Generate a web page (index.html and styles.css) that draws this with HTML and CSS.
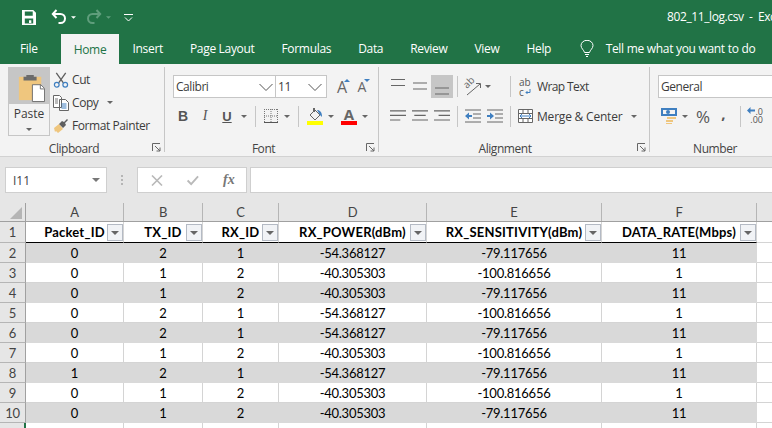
FILE: index.html
```html
<!DOCTYPE html>
<html lang="en">
<head>
<meta charset="utf-8">
<title>802_11_log.csv - Excel</title>
<link rel="stylesheet" href="styles.css">
</head>
<body>
<div class="app">
  <header class="titlebar">
    <svg class="qa qa-save" viewBox="0 0 15 16"><path fill="#fff" fill-rule="evenodd" d="M0 0h12l3 3v13H0zM3 1.500v4.500h8.500V1.500zM3 9v5.500h9V9zM7.500 11h2.500v3H7.500z"/></svg>
    <svg class="qa qa-undo" viewBox="0 0 16 16"><path fill="none" stroke="#fff" stroke-width="2" d="M5.500 1 1.800 5 5.500 9M2 5h7.500a4.500 4.500 0 0 1 0 9H7.500"/></svg>
    <svg class="qa-arrow" viewBox="0 0 6 3"><path fill="#fff" d="M0 0h6L3 3z"/></svg>
    <svg class="qa qa-redo" viewBox="0 0 16 16"><path fill="none" stroke="#5f9e7c" stroke-width="2" d="M10.500 1 14.200 5 10.500 9M14 5H6.500a4.500 4.500 0 0 0 0 9H8.500"/></svg>
    <svg class="qa-arrow qa-arrow-off" viewBox="0 0 6 3"><path fill="#5f9e7c" d="M0 0h6L3 3z"/></svg>
    <svg class="qa qa-more" viewBox="0 0 10 9"><path fill="none" stroke="#fff" d="M0 .5h9M1 3.500l3.500 3.500L8 3.500"/></svg>
    <span class="doc-title">802_11_log.csv  -  Excel</span>
  </header>

  <nav class="tabs">
    <span class="tab tab-file">File</span>
    <span class="tab tab-active">Home</span>
    <span class="tab">Insert</span>
    <span class="tab">Page Layout</span>
    <span class="tab">Formulas</span>
    <span class="tab">Data</span>
    <span class="tab">Review</span>
    <span class="tab">View</span>
    <span class="tab">Help</span>
    <svg class="bulb" viewBox="0 0 14 17"><path fill="none" stroke="#fff" d="M4.500 12.500C4 10 1 8.500 1 5.500a6 5.200 0 0 1 12 0c0 3-3 4.500-3.500 7zM5 14.500h4M6 16.500h2"/></svg>
    <span class="tell">Tell me what you want to do</span>
  </nav>

  <section class="ribbon">
    <div class="group group-clip">
      <div class="clip-body">
        <div class="paste">
          <div class="paste-top">
            <svg class="paste-icon" viewBox="0 0 30 30"><path fill="#efc67e" d="M2 3h24v25H2z"/><path fill="#6b6b6b" d="M7 3h3V1h8v2h3v4H7z"/><path fill="#fff" stroke="#6b6b6b" d="M16.500 11.500h9l4 4v14h-13z"/><path fill="none" stroke="#6b6b6b" d="M25 11.500v4.500h4"/></svg>
          </div>
          <div class="paste-bottom">
            <span>Paste</span>
            <i class="caret"></i>
          </div>
        </div>
        <div class="clip-list">
          <div class="clip-item">
            <svg class="ic16" viewBox="0 0 16 17"><path fill="none" stroke="#5f5f5f" stroke-width="1.400" d="M3 1l7.500 10.500M13 1 5.500 11.500"/><circle cx="3.500" cy="13.500" r="2.500" fill="none" stroke="#3f7fc0" stroke-width="1.300"/><circle cx="12.500" cy="13.500" r="2.500" fill="none" stroke="#3f7fc0" stroke-width="1.300"/></svg>
            <span>Cut</span>
          </div>
          <div class="clip-item">
            <svg class="ic16" viewBox="0 0 16 16"><path fill="#fff" stroke="#666" d="M.5.500h6l2 2v10h-8zM6.500 4.500h6l3 3v8h-9z"/><path stroke="#3f7fc0" d="M8.500 9h5M8.500 11h5M8.500 13h5"/><path stroke="#777" d="M2 4h3M2 6h3M2 8h3"/></svg>
            <span>Copy</span>
            <i class="caret caret-copy"></i>
          </div>
          <div class="clip-item">
            <svg class="ic16" viewBox="0 0 16 16"><path fill="#efc67e" d="M1 10l5-4 4 5-5 4-2-2-1 1z"/><path fill="#5f5f5f" d="M6 6l3-3 2 1 3-3 1 1-3 3 1 2-3 3z"/></svg>
            <span>Format Painter</span>
          </div>
        </div>
      </div>
      <div class="group-label">Clipboard</div>
      <svg class="launcher" viewBox="0 0 9 9"><path fill="none" stroke="#666" d="M.5 8V.500H8M3 3l5 5M8 4.500V8H4.500"/></svg>
    </div>

    <div class="group group-font">
      <div class="group-body">
        <div class="tool-row tool-row-top">
          <div class="combo combo-font"><span>Calibri</span><svg class="chev" viewBox="0 0 14 8"><path fill="none" stroke="#555" d="M.5 1l6.500 6.500L13.500 1"/></svg></div>
          <div class="combo combo-size"><span>11</span><svg class="chev" viewBox="0 0 14 8"><path fill="none" stroke="#555" d="M.5 1l6.500 6.500L13.500 1"/></svg></div>
          <span class="tool-w20 grow">A<svg class="tri" viewBox="0 0 6 3"><path fill="#3f7fc0" d="M3 0l3 3H0z"/></svg></span>
          <span class="tool-w20 shrink">A<svg class="tri" viewBox="0 0 6 3"><path fill="#3f7fc0" d="M0 0h6L3 3z"/></svg></span>
        </div>
        <div class="tool-row">
          <span class="tool txt-b">B</span>
          <span class="tool txt-i">I</span>
          <span class="tool txt-u">U</span>
          <span class="drop drop-12"><i class="caret"></i></span>
          <span class="vsep vsep-a"></span>
          <span class="tool"><svg class="ic14" viewBox="0 0 14 14"><path fill="none" stroke="#777" stroke-dasharray="1 1" d="M.5 0v13M7 0v13M13.500 0v13M0 .5h14M0 7h14"/><path stroke="#555" d="M0 13.500h14"/></svg></span>
          <span class="drop"><i class="caret"></i></span>
          <span class="vsep vsep-b"></span>
          <span class="tool"><svg class="ic-color" viewBox="0 0 16 17"><path fill="none" stroke="#666" d="M3 7l5-5 5 5-5 5z"/><path fill="#666" d="M6 0h2v4H6z"/><path fill="#3f7fc0" d="M10 2c3 0 5 2 5 7l-2-2z"/><path fill="#ff0" d="M0 13h16v4H0z"/></svg></span>
          <span class="drop"><i class="caret"></i></span>
          <span class="tool tool-color"><span class="color-a">A</span><i class="color-bar"></i></span>
          <span class="drop"><i class="caret"></i></span>
        </div>
      </div>
      <div class="group-label">Font</div>
      <svg class="launcher" viewBox="0 0 9 9"><path fill="none" stroke="#666" d="M.5 8V.500H8M3 3l5 5M8 4.500V8H4.500"/></svg>
    </div>

    <div class="group group-align">
      <div class="group-body">
        <div class="tool-row tool-row-top">
          <span class="tool tool-h"><svg class="ic16" viewBox="0 0 14 16"><path stroke="#666" stroke-width="1.200" d="M0 .5h14M0 6.500h14"/></svg></span>
          <span class="tool tool-h"><svg class="ic16" viewBox="0 0 14 16"><path stroke="#666" stroke-width="1.200" d="M0 4h14M0 10h14"/></svg></span>
          <span class="tool tool-h tool-on"><svg class="ic16" viewBox="0 0 14 16"><path stroke="#666" stroke-width="1.200" d="M0 9h14M0 15h14"/></svg></span>
          <span class="vsep vsep-c"></span>
          <span class="align-mid">
            <span class="tool tool-h"><svg class="ic16 ic-orient" viewBox="0 0 16 16"><text class="orient" transform="translate(2 10) rotate(-45)" x="0" y="0">ab</text><path fill="none" stroke="#666" d="M2 16 15 5M11 4.500H15.500V9"/></svg></span>
            <span class="drop drop-7"><i class="caret"></i></span>
          </span>
          <span class="vsep"></span>
          <span class="label-tool label-wrap">
            <span class="wrap-ic"><span>ab</span><span>c<svg class="wrap-arrow" viewBox="0 0 6 6"><path fill="none" stroke="#3f7fc0" d="M5 0v3.500H1M2.500 2 1 3.500 2.500 5"/></svg></span></span>
            <span>Wrap Text</span>
          </span>
        </div>
        <div class="tool-row">
          <span class="tool tool-h"><svg class="ic16" viewBox="0 0 14 12"><path stroke="#666" d="M0 1.500h14M0 5.500h14M0 9.500h9"/></svg></span>
          <span class="tool tool-h"><svg class="ic16" viewBox="0 0 14 12"><path stroke="#666" d="M0 1.500h14M2 5.500h10M0 9.500h14"/></svg></span>
          <span class="tool tool-h"><svg class="ic16" viewBox="0 0 14 12"><path stroke="#666" d="M0 1.500h14M4 5.500h10M0 9.500h14"/></svg></span>
          <span class="vsep vsep-c"></span>
          <span class="align-mid">
            <span class="tool tool-h"><svg class="ic16" viewBox="0 0 16 13"><path stroke="#666" d="M0 .5h16M8 4.500h8M8 8.500h8M0 12.500h16"/><path fill="#3f7fc0" d="M0 6.500 4 3v2.500h3v2H4V10z"/></svg></span>
            <span class="tool tool-h"><svg class="ic16" viewBox="0 0 16 13"><path stroke="#666" d="M0 .5h16M8 4.500h8M8 8.500h8M0 12.500h16"/><path fill="#3f7fc0" d="M7 6.500 3 3v2.500H0v2h3V10z"/></svg></span>
          </span>
          <span class="vsep"></span>
          <span class="label-tool label-merge">
            <svg class="merge-ic" viewBox="0 0 15 14"><path fill="#fff" stroke="#666" d="M.5.500h14v13H.500z"/><path stroke="#666" d="M0 4.500h15M0 9.500h15M5 .5v4M10 .5v4M5 9.500v4M10 9.500v4"/><path fill="none" stroke="#3f7fc0" d="M2 7h11M4 5 2 7l2 2M11 5l2 2-2 2"/></svg>
            <span>Merge &amp; Center</span>
            <i class="caret caret-merge"></i>
          </span>
        </div>
      </div>
      <div class="group-label">Alignment</div>
      <svg class="launcher" viewBox="0 0 9 9"><path fill="none" stroke="#666" d="M.5 8V.500H8M3 3l5 5M8 4.500V8H4.500"/></svg>
    </div>

    <div class="group group-number">
      <div class="group-body">
        <div class="tool-row tool-row-top">
          <div class="combo combo-num"><span>General</span></div>
        </div>
        <div class="tool-row">
          <span class="tool"><svg class="ic-money" viewBox="0 0 16 16"><path fill="#3f7fc0" fill-rule="evenodd" d="M0 0h16v8H0zM2 2v4h12V2z"/><circle cx="7" cy="4" r="2" fill="#3f7fc0"/><path fill="#efc67e" d="M6 9h9v2H6zM5 12h7v2H5zM5 15h6v1H5z"/></svg></span>
          <span class="drop"><i class="caret"></i></span>
          <span class="tool tool-pct">%</span>
          <span class="tool tool-comma">,</span>
          <span class="vsep vsep-d"></span>
          <span class="tool tool-dec"><svg class="dec-arrow" viewBox="0 0 8 7"><path fill="#3f7fc0" d="M0 3.500 3.500 0v2.500H8v2H3.500V7z"/></svg><span class="dec-text">.0<br>.00</span></span>
          <span class="tool"><svg class="dec-arrow" viewBox="0 0 8 7"><path fill="#3f7fc0" d="M0 2.500h8v2H0z"/></svg></span>
        </div>
      </div>
      <div class="group-label">Number</div>
    </div>
  </section>

  <section class="formula-bar">
    <div class="namebox"><span>I11</span><i class="caret caret-name"></i></div>
    <div class="grip"><i></i><i></i><i></i></div>
    <div class="fx-box">
      <svg class="fx-ic" viewBox="0 0 11 11"><path fill="none" stroke="#b9b9b9" stroke-width="1.600" d="M.5.500l10 10M10.500.5l-10 10"/></svg>
      <svg class="fx-ic" viewBox="0 0 13 11"><path fill="none" stroke="#b9b9b9" stroke-width="2" d="M.7 5.500 4.500 9.500 12 1"/></svg>
      <span class="fx-text">fx</span>
    </div>
    <div class="formula-input"></div>
  </section>

  <section class="sheet">
    <div class="row row-head">
      <div class="corner"><svg class="corner-tri" viewBox="0 0 12 12"><path fill="#b5b5b5" d="M12 0v12H0z"/></svg></div>
      <div class="ch">A</div><div class="ch">B</div><div class="ch">C</div><div class="ch">D</div><div class="ch">E</div><div class="ch">F</div><div class="ch"></div>
    </div>
    <div class="row row-1">
      <div class="rh">1</div>
      <div class="c th">Packet_ID<i class="filter"></i></div>
      <div class="c th">TX_ID<i class="filter"></i></div>
      <div class="c th">RX_ID<i class="filter"></i></div>
      <div class="c th">RX_POWER(dBm)<i class="filter"></i></div>
      <div class="c th">RX_SENSITIVITY(dBm)<i class="filter"></i></div>
      <div class="c th">DATA_RATE(Mbps)<i class="filter"></i></div>
      <div class="c"></div>
    </div>
    <div class="row alt"><div class="rh">2</div><div class="c">0</div><div class="c">2</div><div class="c">1</div><div class="c">-54.368127</div><div class="c">-79.117656</div><div class="c">11</div><div class="c blank"></div></div>
    <div class="row"><div class="rh">3</div><div class="c">0</div><div class="c">1</div><div class="c">2</div><div class="c">-40.305303</div><div class="c">-100.816656</div><div class="c">1</div><div class="c blank"></div></div>
    <div class="row alt"><div class="rh">4</div><div class="c">0</div><div class="c">1</div><div class="c">2</div><div class="c">-40.305303</div><div class="c">-79.117656</div><div class="c">11</div><div class="c blank"></div></div>
    <div class="row"><div class="rh">5</div><div class="c">0</div><div class="c">2</div><div class="c">1</div><div class="c">-54.368127</div><div class="c">-100.816656</div><div class="c">1</div><div class="c blank"></div></div>
    <div class="row alt"><div class="rh">6</div><div class="c">0</div><div class="c">2</div><div class="c">1</div><div class="c">-54.368127</div><div class="c">-79.117656</div><div class="c">11</div><div class="c blank"></div></div>
    <div class="row"><div class="rh">7</div><div class="c">0</div><div class="c">1</div><div class="c">2</div><div class="c">-40.305303</div><div class="c">-100.816656</div><div class="c">1</div><div class="c blank"></div></div>
    <div class="row alt"><div class="rh">8</div><div class="c">1</div><div class="c">2</div><div class="c">1</div><div class="c">-54.368127</div><div class="c">-79.117656</div><div class="c">11</div><div class="c blank"></div></div>
    <div class="row"><div class="rh">9</div><div class="c">0</div><div class="c">1</div><div class="c">2</div><div class="c">-40.305303</div><div class="c">-100.816656</div><div class="c">1</div><div class="c blank"></div></div>
    <div class="row alt"><div class="rh">10</div><div class="c">0</div><div class="c">1</div><div class="c">2</div><div class="c">-40.305303</div><div class="c">-79.117656</div><div class="c">11</div><div class="c blank"></div></div>
    <div class="row row-11"><div class="rh rh-sel"></div><div class="c"></div><div class="c"></div><div class="c"></div><div class="c"></div><div class="c"></div><div class="c"></div><div class="c"></div></div>
  </section>
</div>
</body>
</html>
```

FILE: styles.css
```css
* { box-sizing: border-box; }
html, body { margin: 0; padding: 0; height: 100%; overflow: hidden; }
body { background: #fff; font-family: "Open Sans", "Noto Sans", sans-serif; font-size: 12px; color: #3c3c3c; }
i { display: block; font-style: normal; }
svg { display: block; flex: none; }

.app { width: 772px; height: 428px; overflow: hidden; display: flex; flex-direction: column; }

/* title bar */
.titlebar { height: 34px; flex: none; background: #217346; display: flex; align-items: center; color: #fff; padding-left: 22px; white-space: pre; overflow: hidden; }
.qa-save { width: 14px; height: 15px; margin-top: 1px; }
.qa-undo { width: 16px; height: 16px; margin-left: 15px; }
.qa-arrow { width: 5px; height: 3px; margin-left: 4px; margin-top: 1px; }
.qa-redo { width: 16px; height: 16px; margin-left: 10px; }
.qa-arrow-off { margin-left: 4px; }
.qa-more { width: 10px; height: 9px; margin-left: 13px; margin-top: 2px; }
.doc-title { margin-left: 533px; flex: none; font-size: 12px; letter-spacing: -.4px; margin-top: -2px; }

/* tabs */
.tabs { height: 30px; flex: none; background: #217346; display: flex; color: #fff; white-space: nowrap; }
.tab { display: flex; align-items: center; padding: 0 13.500px 1px; font-size: 12px; letter-spacing: -.32px; }
.tab-file { padding: 0 0 1px 20px; width: 61px; }
.tab-active { background: #f3f3f3; color: #217346; width: 58px; padding: 0; justify-content: center; }
.bulb { width: 14px; height: 17px; margin: 6px 0 0 15px; }
.tell { display: flex; align-items: center; margin-left: 12px; padding-bottom: 1px; letter-spacing: -.3px; }

/* ribbon */
.ribbon { height: 93px; flex: none; background: #f3f3f3; border-bottom: 1px solid #d2d2d2; padding-top: 3px; display: flex; overflow: hidden; white-space: nowrap; }
.group { position: relative; height: 85px; flex: none; display: flex; flex-direction: column; border-right: 1px solid #c6c6c6; }
.group-clip { width: 165px; }
.group-font { width: 214px; }
.group-align { width: 271px; }
.group-number { width: 122px; border-right: 0; }
.group-body { flex: 1; padding: 8px 0 0 8px; min-height: 0; }
.group-label { height: 16px; line-height: 26px; text-align: center; font-size: 12px; letter-spacing: -.45px; color: #444; padding-right: 16px; }
.group-align .group-label { padding-right: 18px; }
.group-number .group-label { padding: 0 0 0 8px; }
.launcher { position: absolute; right: 3px; bottom: 0; width: 9px; height: 9px; }

.caret { width: 0; height: 0; border: 3.500px solid transparent; border-top: 3.500px solid #666; border-bottom: 0; }

/* clipboard */
.clip-body { flex: 1; display: flex; padding-left: 8px; min-height: 0; }
.paste { width: 42px; height: 69px; display: flex; flex-direction: column; text-align: center; }
.paste-top { height: 37px; background: #c6c6c6; display: flex; padding: 6px 0 0 9px; }
.paste-icon { width: 28px; height: 30px; }
.paste-bottom { flex: 1; border: 1px solid #c6c6c6; border-top: 0; display: flex; flex-direction: column; align-items: center; padding-top: 1px; }
.paste-bottom span { line-height: 18px; }
.paste-bottom .caret { margin-top: 5px; }
.clip-list { margin-left: 3px; padding-top: 1px; }
.clip-item { height: 23px; display: flex; align-items: center; letter-spacing: -.42px; }
.clip-item span { margin-left: 3px; }
.ic16 { width: 16px; height: 16px; }
.caret-copy { margin-left: 9px; }

/* generic tools */
.tool-row { display: flex; align-items: center; height: 22px; margin-bottom: 7px; }
.tool-row-top { height: 23px; }
.tool { width: 22px; height: 22px; flex: none; display: flex; align-items: center; justify-content: center; }
.tool-h { height: 23px; }
.tool-on { background: #c6c6c6; }
.drop { width: 10px; display: flex; justify-content: center; flex: none; }
.drop-12 { width: 12px; }
.drop-7 { width: 7px; }
.vsep { width: 1px; height: 21px; background: #c6c6c6; flex: none; }
.ic14 { width: 14px; height: 14px; }

/* font group */
.combo { height: 23px; background: #fff; border: 1px solid #c6c6c6; display: flex; align-items: center; justify-content: space-between; padding: 0 2px 0 2px; font-size: 12px; letter-spacing: -.45px; flex: none; }
.combo-font { width: 103px; }
.combo-size { width: 51px; border-left: 0; padding-right: 4px; }
.combo-num { width: 130px; }
.chev { width: 14px; height: 8px; }
.tool-w20 { width: 20px; height: 23px; flex: none; display: flex; align-items: center; justify-content: center; font-family: "Open Sans", sans-serif; color: #666; position: relative; }
.grow { margin-left: 5px; font-size: 16px; }
.shrink { font-size: 14px; }
.tri { position: absolute; top: 4px; right: 2px; width: 6px; height: 3px; }
.txt-b { font-family: "Liberation Sans", sans-serif; font-weight: 700; font-size: 14px; color: #555; margin-left: -1px; }
.txt-i { font-family: "Liberation Serif", serif; font-style: italic; font-size: 14px; color: #555; }
.txt-u { font-family: "Liberation Sans", sans-serif; font-weight: 700; font-size: 13px; color: #555; text-decoration: underline; }
.vsep-a { margin: 0 4px 0 5px; }
.vsep-b { margin: 0 5px 0 6px; }
.ic-color { width: 16px; height: 17px; }
.tool-color { margin-left: 2px; flex-direction: column; }
.color-a { font-weight: 700; font-size: 15px; line-height: 14px; color: #666; }
.color-bar { width: 16px; height: 4px; background: #f00; }

/* alignment group */
.vsep-c { margin: 0 4px; }
.align-mid { width: 48px; display: flex; align-items: center; flex: none; }
.ic-orient { overflow: visible; }
.orient { font-family: "Open Sans", sans-serif; font-size: 10px; fill: #666; }
.label-tool { display: flex; align-items: center; margin-left: 8px; letter-spacing: -.2px; }
.label-wrap { letter-spacing: -.6px; }
.wrap-ic { width: 15px; margin-right: 3px; display: flex; flex-direction: column; font-size: 10px; line-height: 10px; letter-spacing: 0; color: #555; }
.wrap-ic span { display: flex; align-items: center; }
.wrap-arrow { width: 6px; height: 6px; margin-left: 1px; }
.label-merge { margin-left: 7px; }
.merge-ic { width: 15px; height: 14px; margin-right: 4px; }
.caret-merge { margin-left: 9px; }

/* number group */
.ic-money { width: 16px; height: 16px; }
.tool-pct { font-size: 17px; color: #555; margin-left: 2px; }
.tool-comma { font-size: 15px; font-weight: 700; color: #555; padding: 0 3px 6px 0; }
.vsep-d { margin: 0 3px 0 4px; }
.tool-dec { position: relative; justify-content: flex-end; font-size: 9px; line-height: 8px; color: #555; }
.dec-arrow { width: 8px; height: 7px; }
.tool-dec .dec-arrow { position: absolute; left: 3px; top: 2px; }
.dec-text { text-align: right; padding-right: 3px; }

/* formula bar */
.formula-bar { height: 46px; flex: none; background: #e6e6e6; display: flex; align-items: flex-start; padding: 10px 0 0 5px; }
.namebox { width: 102px; height: 26px; background: #fff; border: 1px solid #cfcfcf; display: flex; align-items: center; justify-content: space-between; padding: 0 6px 0 7px; color: #444; }
.caret-name { border-width: 4px; border-top: 4px solid #777; border-bottom: 0; }
.grip { width: 30px; height: 26px; display: flex; flex-direction: column; align-items: center; justify-content: center; gap: 2px; }
.grip i { width: 2px; height: 2px; background: #b5b5b5; }
.fx-box { width: 110px; height: 26px; background: #fff; border: 1px solid #cfcfcf; display: flex; align-items: center; padding-left: 13px; gap: 24px; }
.fx-ic { width: 12px; height: 11px; }
.fx-text { font-family: "Liberation Serif", serif; font-style: italic; font-weight: 700; font-size: 14px; color: #777; }
.formula-input { flex: 1; height: 26px; margin-left: 3px; background: #fff; border: 1px solid #cfcfcf; border-right: 0; }

/* sheet */
.sheet { flex: 1; background: #fff; font-family: "Lato", "Liberation Sans", sans-serif; font-size: 13px; letter-spacing: -.25px; color: #000; min-height: 0; }
.row { display: grid; grid-template-columns: 26px 98px 79px 76px 148px 175px 155px 15px; height: 20px; }
.row-head { height: 19px; background: #e6e6e6; color: #444; border-bottom: 1px solid #a0a0a0; }
.corner { position: relative; border-right: 1px solid #a0a0a0; }
.corner-tri { position: absolute; left: 10px; top: 4px; width: 12px; height: 12px; }
.ch { display: flex; align-items: center; justify-content: center; border-right: 1px solid #b5b5b5; }
.ch:last-child { border-right: 0; }
.row-1 { height: 21px; }
.rh { background: #e6e6e6; color: #444; border-right: 1px solid #a0a0a0; border-bottom: 1px solid #b5b5b5; display: flex; align-items: center; justify-content: center; }
.c { display: flex; align-items: center; justify-content: center; border-right: 1px solid #d4d4d4; border-bottom: 1px solid #d4d4d4; position: relative; }
.c:last-child { border-right: 0; }
.alt { background: #d9d9d9; }
.alt .c { border-color: #d9d9d9; }
.alt .blank { background: #fff; border-bottom: 1px solid #d4d4d4; }
.th { white-space: nowrap; font-weight: 700; letter-spacing: .2px; border-bottom: 1px solid #000; }
.filter { position: absolute; right: 0; top: 2px; width: 16px; height: 17px; background: #f1f3f6; border: 1px solid #b4bac4; }
.filter::after { content: ""; position: absolute; left: 3px; top: 6px; border: 4px solid transparent; border-top: 4px solid #666; border-bottom: 0; }
.row-11 .c { border-bottom: 0; }
.rh-sel { border-right: 2px solid #217346; border-bottom: 0; }
```
